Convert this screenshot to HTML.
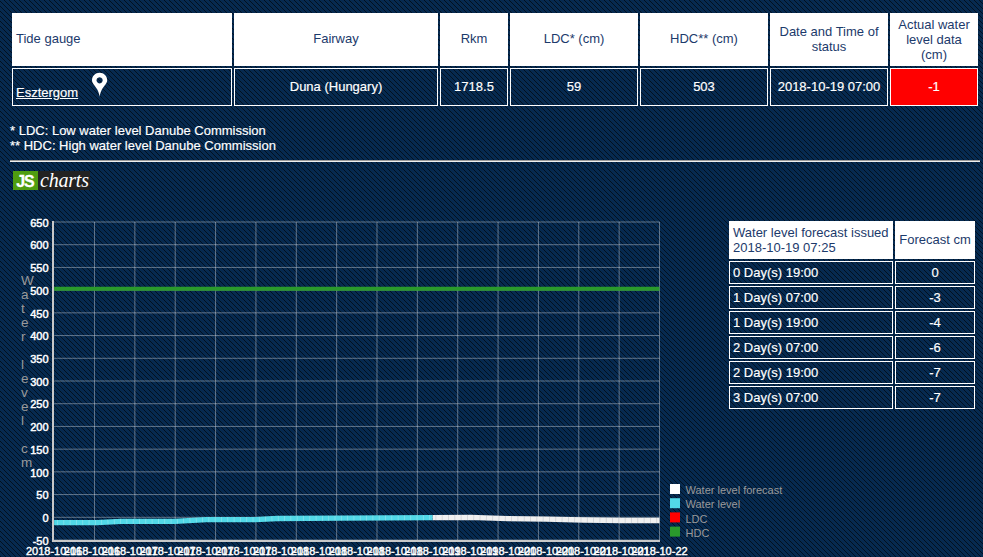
<!DOCTYPE html>
<html lang="en">
<head>
<meta charset="utf-8">
<title>Tide gauge - Esztergom</title>
<style>
html,body{margin:0;padding:0;}
body{width:983px;height:557px;overflow:hidden;position:relative;background:#062a50;font-family:"Liberation Sans",Arial,sans-serif;font-size:13px;color:#fff;}
#bg{position:absolute;left:0;top:0;width:983px;height:557px;z-index:0;}
.abs{position:absolute;}
.cell{position:absolute;box-sizing:border-box;display:flex;align-items:center;justify-content:center;text-align:center;line-height:15px;}
.h{background:#fff;color:#1c3a6b;}
.d{border:1px solid #fff;color:#fff;-webkit-text-stroke:0.18px #fff;padding-bottom:2px;}
.l{justify-content:flex-start;text-align:left;padding-left:4px;}
.red{background:#ff0000;}
a{color:#fff;text-decoration:underline;}
#note{position:absolute;left:10px;top:123px;line-height:15px;color:#fff;white-space:nowrap;-webkit-text-stroke:0.18px #fff;}
#hr{position:absolute;left:10px;top:160px;width:970px;height:2px;box-sizing:border-box;border-top:1px solid #9a9a9a;border-bottom:1px solid #eeeeee;}
#logo{position:absolute;left:13px;top:171px;height:19px;width:77px;background:#222;}
#logo .js{position:absolute;left:0;top:0;width:25px;height:19px;background:#4f9d10;color:#fff;font-weight:bold;font-size:16px;line-height:21px;text-align:center;letter-spacing:-1.1px;text-indent:-1px;-webkit-text-stroke:0.3px #fff;}
#logo .ch{position:absolute;left:27px;top:0;height:19px;line-height:18px;color:#fff;font-family:"Liberation Serif","Times New Roman",serif;font-style:italic;font-size:20px;letter-spacing:-0.2px;}
#chart{position:absolute;left:0;top:0;width:983px;height:557px;z-index:1;}
#chart text{font-family:"Liberation Sans",Arial,sans-serif;}
</style>
</head>
<body>
<svg id="bg" width="983" height="557">
<defs><pattern id="pt" x="0" y="0" width="5" height="5" patternUnits="userSpaceOnUse">
<rect width="5" height="5" fill="#062a50"/>
<rect x="4" y="0" width="1" height="1" fill="#03101f"/>
<rect x="0" y="1" width="1" height="1" fill="#03101f"/>
<rect x="1" y="2" width="1" height="1" fill="#03101f"/>
<rect x="2" y="3" width="1" height="1" fill="#03101f"/>
<rect x="3" y="4" width="1" height="1" fill="#03101f"/>
</pattern></defs>
<rect width="983" height="557" fill="url(#pt)" shape-rendering="crispEdges"/>
</svg>

<div id="main" style="position:absolute;left:0;top:0;z-index:2;">
<div class="cell h l" style="left:12px;top:13px;width:220px;height:53px;padding-bottom:2px;">Tide gauge</div>
<div class="cell h" style="left:234px;top:13px;width:204px;height:53px;padding-bottom:2px;">Fairway</div>
<div class="cell h" style="left:440px;top:13px;width:68px;height:53px;padding-bottom:2px;">Rkm</div>
<div class="cell h" style="left:510px;top:13px;width:128px;height:53px;padding-bottom:2px;">LDC* (cm)</div>
<div class="cell h" style="left:640px;top:13px;width:128px;height:53px;padding-bottom:2px;">HDC** (cm)</div>
<div class="cell h" style="left:770px;top:13px;width:118px;height:53px;padding:0 8px 2px 8px;">Date and Time of status</div>
<div class="cell h" style="left:890px;top:13px;width:88px;height:53px;padding:0 8px;">Actual water level data (cm)</div>
<div class="cell d l" style="left:12px;top:68px;width:220px;height:38px;"><a href="#" style="position:relative;top:6px;left:-1px;">Esztergom</a><svg width="17" height="26" viewBox="0 0 17 26" style="position:absolute;left:78px;top:3px;"><path d="M8.6 0.8 C4.3 0.8 1 4.1 1 8.2 C1 11.4 4.2 13.8 6.3 17.4 C7.5 19.5 8.2 22 8.6 24.8 C9 22 9.7 19.5 10.9 17.4 C13 13.8 16.2 11.4 16.2 8.2 C16.2 4.1 12.9 0.8 8.6 0.8 Z M8.6 5.2 A3.1 3.1 0 1 1 8.59 5.2 Z" fill="#fff" fill-rule="evenodd"/></svg></div>
<div class="cell d" style="left:234px;top:68px;width:204px;height:38px;">Duna (Hungary)</div>
<div class="cell d" style="left:440px;top:68px;width:68px;height:38px;">1718.5</div>
<div class="cell d" style="left:510px;top:68px;width:128px;height:38px;">59</div>
<div class="cell d" style="left:640px;top:68px;width:128px;height:38px;">503</div>
<div class="cell d" style="left:770px;top:68px;width:118px;height:38px;">2018-10-19 07:00</div>
<div class="cell d red" style="left:890px;top:68px;width:88px;height:38px;">-1</div>
</div>
<div id="note" style="z-index:2;">* LDC: Low water level Danube Commission<br>** HDC: High water level Danube Commission</div>
<div id="hr" style="z-index:2;"></div>
<div id="logo" style="z-index:2;"><div class="js">JS</div><div class="ch">charts</div></div>
<div id="fc" style="position:absolute;left:0;top:0;z-index:2;">
<div class="cell h l" style="left:729px;top:221px;width:164px;height:38px;">Water level forecast issued<br>2018-10-19 07:25</div>
<div class="cell h" style="left:895px;top:221px;width:80px;height:38px;padding-bottom:2px;">Forecast cm</div>
<div class="cell d l" style="left:729px;top:261px;width:164px;height:23px;padding-left:3px;padding-bottom:0;">0 Day(s) 19:00</div>
<div class="cell d" style="left:895px;top:261px;width:80px;height:23px;padding-bottom:0;">0</div>
<div class="cell d l" style="left:729px;top:286px;width:164px;height:23px;padding-left:3px;padding-bottom:0;">1 Day(s) 07:00</div>
<div class="cell d" style="left:895px;top:286px;width:80px;height:23px;padding-bottom:0;">-3</div>
<div class="cell d l" style="left:729px;top:311px;width:164px;height:23px;padding-left:3px;padding-bottom:0;">1 Day(s) 19:00</div>
<div class="cell d" style="left:895px;top:311px;width:80px;height:23px;padding-bottom:0;">-4</div>
<div class="cell d l" style="left:729px;top:336px;width:164px;height:23px;padding-left:3px;padding-bottom:0;">2 Day(s) 07:00</div>
<div class="cell d" style="left:895px;top:336px;width:80px;height:23px;padding-bottom:0;">-6</div>
<div class="cell d l" style="left:729px;top:361px;width:164px;height:23px;padding-left:3px;padding-bottom:0;">2 Day(s) 19:00</div>
<div class="cell d" style="left:895px;top:361px;width:80px;height:23px;padding-bottom:0;">-7</div>
<div class="cell d l" style="left:729px;top:386px;width:164px;height:23px;padding-left:3px;padding-bottom:0;">3 Day(s) 07:00</div>
<div class="cell d" style="left:895px;top:386px;width:80px;height:23px;padding-bottom:0;">-7</div>
</div>
<svg id="chart" width="983" height="557" viewBox="0 0 983 557">
<line x1="54.14" y1="222" x2="659.5" y2="222" stroke="rgba(255,255,255,0.37)" stroke-width="1"/>
<line x1="54.14" y1="244.714" x2="659.5" y2="244.714" stroke="rgba(255,255,255,0.37)" stroke-width="1"/>
<line x1="54.14" y1="267.429" x2="659.5" y2="267.429" stroke="rgba(255,255,255,0.37)" stroke-width="1"/>
<line x1="54.14" y1="290.143" x2="659.5" y2="290.143" stroke="rgba(255,255,255,0.37)" stroke-width="1"/>
<line x1="54.14" y1="312.857" x2="659.5" y2="312.857" stroke="rgba(255,255,255,0.37)" stroke-width="1"/>
<line x1="54.14" y1="335.571" x2="659.5" y2="335.571" stroke="rgba(255,255,255,0.37)" stroke-width="1"/>
<line x1="54.14" y1="358.286" x2="659.5" y2="358.286" stroke="rgba(255,255,255,0.37)" stroke-width="1"/>
<line x1="54.14" y1="381" x2="659.5" y2="381" stroke="rgba(255,255,255,0.37)" stroke-width="1"/>
<line x1="54.14" y1="403.714" x2="659.5" y2="403.714" stroke="rgba(255,255,255,0.37)" stroke-width="1"/>
<line x1="54.14" y1="426.429" x2="659.5" y2="426.429" stroke="rgba(255,255,255,0.37)" stroke-width="1"/>
<line x1="54.14" y1="449.143" x2="659.5" y2="449.143" stroke="rgba(255,255,255,0.37)" stroke-width="1"/>
<line x1="54.14" y1="471.857" x2="659.5" y2="471.857" stroke="rgba(255,255,255,0.37)" stroke-width="1"/>
<line x1="54.14" y1="494.571" x2="659.5" y2="494.571" stroke="rgba(255,255,255,0.37)" stroke-width="1"/>
<line x1="54.14" y1="517.286" x2="659.5" y2="517.286" stroke="rgba(255,255,255,0.37)" stroke-width="1"/>
<line x1="54.14" y1="540" x2="659.5" y2="540" stroke="rgba(255,255,255,0.37)" stroke-width="1"/>
<line x1="94.4973" y1="222" x2="94.4973" y2="540" stroke="rgba(255,255,255,0.37)" stroke-width="1"/>
<line x1="134.855" y1="222" x2="134.855" y2="540" stroke="rgba(255,255,255,0.37)" stroke-width="1"/>
<line x1="175.212" y1="222" x2="175.212" y2="540" stroke="rgba(255,255,255,0.37)" stroke-width="1"/>
<line x1="215.569" y1="222" x2="215.569" y2="540" stroke="rgba(255,255,255,0.37)" stroke-width="1"/>
<line x1="255.927" y1="222" x2="255.927" y2="540" stroke="rgba(255,255,255,0.37)" stroke-width="1"/>
<line x1="296.284" y1="222" x2="296.284" y2="540" stroke="rgba(255,255,255,0.37)" stroke-width="1"/>
<line x1="336.641" y1="222" x2="336.641" y2="540" stroke="rgba(255,255,255,0.37)" stroke-width="1"/>
<line x1="376.999" y1="222" x2="376.999" y2="540" stroke="rgba(255,255,255,0.37)" stroke-width="1"/>
<line x1="417.356" y1="222" x2="417.356" y2="540" stroke="rgba(255,255,255,0.37)" stroke-width="1"/>
<line x1="457.713" y1="222" x2="457.713" y2="540" stroke="rgba(255,255,255,0.37)" stroke-width="1"/>
<line x1="498.071" y1="222" x2="498.071" y2="540" stroke="rgba(255,255,255,0.37)" stroke-width="1"/>
<line x1="538.428" y1="222" x2="538.428" y2="540" stroke="rgba(255,255,255,0.37)" stroke-width="1"/>
<line x1="578.785" y1="222" x2="578.785" y2="540" stroke="rgba(255,255,255,0.37)" stroke-width="1"/>
<line x1="619.143" y1="222" x2="619.143" y2="540" stroke="rgba(255,255,255,0.37)" stroke-width="1"/>
<line x1="659.5" y1="222" x2="659.5" y2="540" stroke="rgba(255,255,255,0.37)" stroke-width="1"/>
<rect x="52" y="221" width="2" height="321" fill="#c8c8c8"/>
<rect x="52" y="540" width="608" height="2" fill="#c8c8c8"/>
<line x1="54.14" y1="288.78" x2="659.5" y2="288.78" stroke="#2a9a2c" stroke-width="3.9"/>
<polyline points="432.5,517.7 470.3,517.3 508.2,518.6 546.0,519.1 583.8,520.0 621.7,520.5 659.5,520.5" fill="none" stroke="#f0f0f0" stroke-width="5.3" stroke-linejoin="round"/>
<polyline points="432.5,517.7 470.3,517.3 508.2,518.6 546.0,519.1 583.8,520.0 621.7,520.5 659.5,520.5" fill="none" stroke="rgba(90,100,120,0.22)" stroke-width="5.3" stroke-dasharray="0.8 5.51" stroke-dashoffset="-3"/>
<polyline points="54.1,522.7 97.0,522.7 121.0,521.4 174.9,521.4 206.1,519.6 255.0,519.6 277.1,518.5 340.1,518.2 432.5,517.7" fill="none" stroke="#52d8e7" stroke-width="5.3" stroke-linejoin="round"/>
<polyline points="54.1,522.7 97.0,522.7 121.0,521.4 174.9,521.4 206.1,519.6 255.0,519.6 277.1,518.5 340.1,518.2 432.5,517.7" fill="none" stroke="rgba(255,255,255,0.28)" stroke-width="5.3" stroke-dasharray="0.8 5.51" stroke-dashoffset="-3"/>
<text x="48.6" y="226.6" text-anchor="end" font-size="11" fill="#fff" stroke="#fff" stroke-width="0.45">650</text>
<text x="48.6" y="249.3" text-anchor="end" font-size="11" fill="#fff" stroke="#fff" stroke-width="0.45">600</text>
<text x="48.6" y="272.0" text-anchor="end" font-size="11" fill="#fff" stroke="#fff" stroke-width="0.45">550</text>
<text x="48.6" y="294.7" text-anchor="end" font-size="11" fill="#fff" stroke="#fff" stroke-width="0.45">500</text>
<text x="48.6" y="317.5" text-anchor="end" font-size="11" fill="#fff" stroke="#fff" stroke-width="0.45">450</text>
<text x="48.6" y="340.2" text-anchor="end" font-size="11" fill="#fff" stroke="#fff" stroke-width="0.45">400</text>
<text x="48.6" y="362.9" text-anchor="end" font-size="11" fill="#fff" stroke="#fff" stroke-width="0.45">350</text>
<text x="48.6" y="385.6" text-anchor="end" font-size="11" fill="#fff" stroke="#fff" stroke-width="0.45">300</text>
<text x="48.6" y="408.3" text-anchor="end" font-size="11" fill="#fff" stroke="#fff" stroke-width="0.45">250</text>
<text x="48.6" y="431.0" text-anchor="end" font-size="11" fill="#fff" stroke="#fff" stroke-width="0.45">200</text>
<text x="48.6" y="453.7" text-anchor="end" font-size="11" fill="#fff" stroke="#fff" stroke-width="0.45">150</text>
<text x="48.6" y="476.5" text-anchor="end" font-size="11" fill="#fff" stroke="#fff" stroke-width="0.45">100</text>
<text x="48.6" y="499.2" text-anchor="end" font-size="11" fill="#fff" stroke="#fff" stroke-width="0.45">50</text>
<text x="48.6" y="521.9" text-anchor="end" font-size="11" fill="#fff" stroke="#fff" stroke-width="0.45">0</text>
<text x="48.6" y="544.6" text-anchor="end" font-size="11" fill="#fff" stroke="#fff" stroke-width="0.45">-50</text>
<text x="54.1" y="555" text-anchor="middle" font-size="11" fill="#fff" stroke="#fff" stroke-width="0.4">2018-10-16</text>
<text x="92.0" y="555" text-anchor="middle" font-size="11" fill="#fff" stroke="#fff" stroke-width="0.4">2018-10-16</text>
<text x="129.8" y="555" text-anchor="middle" font-size="11" fill="#fff" stroke="#fff" stroke-width="0.4">2018-10-17</text>
<text x="167.6" y="555" text-anchor="middle" font-size="11" fill="#fff" stroke="#fff" stroke-width="0.4">2018-10-17</text>
<text x="205.5" y="555" text-anchor="middle" font-size="11" fill="#fff" stroke="#fff" stroke-width="0.4">2018-10-17</text>
<text x="243.3" y="555" text-anchor="middle" font-size="11" fill="#fff" stroke="#fff" stroke-width="0.4">2018-10-17</text>
<text x="281.1" y="555" text-anchor="middle" font-size="11" fill="#fff" stroke="#fff" stroke-width="0.4">2018-10-18</text>
<text x="319.0" y="555" text-anchor="middle" font-size="11" fill="#fff" stroke="#fff" stroke-width="0.4">2018-10-18</text>
<text x="356.8" y="555" text-anchor="middle" font-size="11" fill="#fff" stroke="#fff" stroke-width="0.4">2018-10-18</text>
<text x="394.7" y="555" text-anchor="middle" font-size="11" fill="#fff" stroke="#fff" stroke-width="0.4">2018-10-18</text>
<text x="432.5" y="555" text-anchor="middle" font-size="11" fill="#fff" stroke="#fff" stroke-width="0.4">2018-10-19</text>
<text x="470.3" y="555" text-anchor="middle" font-size="11" fill="#fff" stroke="#fff" stroke-width="0.4">2018-10-19</text>
<text x="508.2" y="555" text-anchor="middle" font-size="11" fill="#fff" stroke="#fff" stroke-width="0.4">2018-10-20</text>
<text x="546.0" y="555" text-anchor="middle" font-size="11" fill="#fff" stroke="#fff" stroke-width="0.4">2018-10-20</text>
<text x="583.8" y="555" text-anchor="middle" font-size="11" fill="#fff" stroke="#fff" stroke-width="0.4">2018-10-21</text>
<text x="621.7" y="555" text-anchor="middle" font-size="11" fill="#fff" stroke="#fff" stroke-width="0.4">2018-10-21</text>
<text x="659.5" y="555" text-anchor="middle" font-size="11" fill="#fff" stroke="#fff" stroke-width="0.4">2018-10-22</text>
<text x="21" y="285" font-size="13.5" fill="#9a9a9a">W</text>
<text x="21" y="299" font-size="13.5" fill="#9a9a9a">a</text>
<text x="21" y="313" font-size="13.5" fill="#9a9a9a">t</text>
<text x="21" y="327" font-size="13.5" fill="#9a9a9a">e</text>
<text x="21" y="341" font-size="13.5" fill="#9a9a9a">r</text>
<text x="21" y="369" font-size="13.5" fill="#9a9a9a">l</text>
<text x="21" y="383" font-size="13.5" fill="#9a9a9a">e</text>
<text x="21" y="397" font-size="13.5" fill="#9a9a9a">v</text>
<text x="21" y="411" font-size="13.5" fill="#9a9a9a">e</text>
<text x="21" y="425" font-size="13.5" fill="#9a9a9a">l</text>
<text x="21" y="453" font-size="13.5" fill="#9a9a9a">c</text>
<text x="21" y="467" font-size="13.5" fill="#9a9a9a">m</text>
<rect x="670" y="484.0" width="10" height="10" fill="#ffffff"/>
<text x="685.5" y="494.2" font-size="11" fill="#999999">Water level forecast</text>
<rect x="670" y="498.2" width="10" height="10" fill="#52d8e7"/>
<text x="685.5" y="508.4" font-size="11" fill="#999999">Water level</text>
<rect x="670" y="512.4" width="10" height="10" fill="#ff0000"/>
<text x="685.5" y="522.6" font-size="11" fill="#999999">LDC</text>
<rect x="670" y="526.6" width="10" height="10" fill="#2a9a2c"/>
<text x="685.5" y="536.8" font-size="11" fill="#999999">HDC</text>
</svg>
</body></html>
